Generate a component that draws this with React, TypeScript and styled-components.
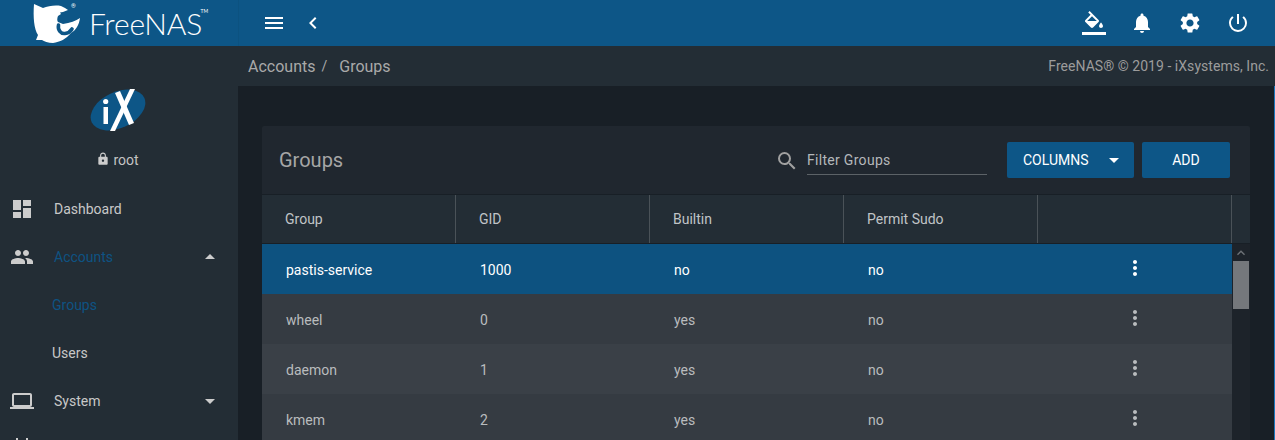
import React from 'react';
import styled, { createGlobalStyle } from 'styled-components';
import {
  MdDashboard, MdPeople, MdLaptop, MdLock, MdNotifications, MdSettings,
  MdPowerSettingsNew, MdMenu, MdChevronLeft, MdSearch, MdMoreVert, MdArrowDropDown, MdArrowDropUp,
  MdEvent, MdKeyboardArrowUp,
} from 'react-icons/md';

const Global = createGlobalStyle`
  html, body { margin: 0; padding: 0; height: 100%; overflow: hidden; background: #181f26; }
  #root { height: 440px; overflow: hidden; }
  * { box-sizing: border-box; }
  body { font-family: Roboto, "Liberation Sans", sans-serif; font-size: 14px; color: #c8c8c8; }
`;

const Page = styled.div`display: flex; flex-direction: column; width: 1275px; height: 440px; overflow: hidden;`;
const TopBar = styled.header`display: flex; height: 46px; flex: none; background: #0d5687; color: #fff;`;
const Brand = styled.div`
  width: 239px; flex: none; display: flex; align-items: center; padding-left: 33px; gap: 6px;
  border-right: 1px solid #0c5280;
`;
const BrandName = styled.span`
  font-family: Lato, sans-serif; font-weight: 300; font-size: 30px; line-height: 46px; letter-spacing: -0.2px; color: #fff;
  position: relative;
  sup { position: absolute; font-size: 5px; letter-spacing: 0; top: -12px; right: -6px; line-height: 46px; font-weight: 400; }
`;
const TopTools = styled.div`flex: 1; display: flex; align-items: center; padding: 0 25px 0 23px; font-size: 24px;`;
const TopIcon = styled.span`display: flex; align-items: center; justify-content: center; width: 24px;`;
const BackIcon = styled(TopIcon)`margin-left: 15px;`;
const Spacer = styled.div`flex: 1;`;
const TopRight = styled.div`display: flex; align-items: center; gap: 24px;`;

const Body = styled.div`flex: 1; display: flex; min-height: 0;`;
const Sidebar = styled.aside`width: 238px; flex: none; background: #232d35; overflow: hidden;`;
const Profile = styled.div`height: 139px; display: flex; flex-direction: column; align-items: center; padding-top: 42px; padding-right: 3px;`;
const ProfileName = styled.div`
  margin-top: 18px; display: flex; align-items: center; gap: 3px; font-size: 14px; line-height: 20px; color: #c4c4c4;
  svg { color: #ccc; margin-top: -2px; }
`;
const NavItem = styled.div<{ $active?: boolean; $sub?: boolean }>`
  height: 48px; flex: none; display: flex; align-items: center;
  padding-left: ${p => (p.$sub ? 52 : 10)}px;
  color: ${p => (p.$active ? '#0e5383' : '#c8c8c8')};
`;
const NavIcon = styled.span`width: 44px; flex: none; display: flex; color: #ccc; font-size: 24px;`;
const NavCaret = styled.span`margin-left: auto; margin-right: 16px; display: flex; color: #ccc; font-size: 24px;`;

const Main = styled.main`flex: 1; display: flex; flex-direction: column; min-width: 0;`;
const Crumbs = styled.div`
  height: 40px; flex: none; background: #232d35; display: flex; align-items: center; padding: 0 6px 0 10px;
  font-size: 16px; color: #a9a9a9;
`;
const CrumbSep = styled.span`margin: 0 12px 0 6px; font-size: 14px;`;
const Copy = styled.span`margin-left: auto; font-size: 14px; letter-spacing: 0.04px; color: #9c9c9c;`;

const Content = styled.div`
  flex: 1; padding: 40px 24px 0 24px; background: #181f26; min-height: 0; border-right: 1px solid #1c78bd;
`;
const Card = styled.section`background: #20272f; border-radius: 2px 2px 0 0; height: 100%; overflow: hidden; display: flex; flex-direction: column;`;
const CardHead = styled.div`
  height: 69px; flex: none; display: flex; align-items: center; padding: 0 20px 0 17px; border-bottom: 1px solid #181f26;
`;
const CardTitle = styled.h2`margin: 0; font-size: 20px; font-weight: 400; color: #a6a6a6; flex: 1; padding-bottom: 1px;`;
const SearchIcon = styled.span`display: flex; font-size: 24px; color: #a0a0a0; margin-right: 8px; margin-top: 2px;`;
const Filter = styled.div`
  width: 180px; height: 28px; margin-right: 20px; border-bottom: 1px solid #5c6267; color: #b4b8bb; line-height: 27px;
  font-size: 14px; letter-spacing: 0.3px; margin-top: 1px;
`;
const Btn = styled.button<{ $w: number }>`
  width: ${p => p.$w}px; height: 36px; border: 0; border-radius: 2px; background: #0d5687; color: #fff;
  font: 400 14px Roboto, sans-serif; display: flex; align-items: center; justify-content: center; padding: 0;
`;
const ColumnsBtn = styled(Btn)`
  justify-content: flex-start; padding-left: 16px; margin-right: 8px;
  svg { margin-left: 13px; font-size: 24px; }
`;

const Table = styled.div`flex: 1; display: flex; flex-direction: column; min-height: 0;`;
const HeadRow = styled.div`
  height: 49px; flex: none; display: grid; grid-template-columns: repeat(5, 194px) 1fr; background: #232d35;
  border-bottom: 1px solid #181f26;
`;
const HeadCell = styled.div`
  display: flex; align-items: center; padding-left: 23px; color: #c0c4c7; font-size: 14px;
  border-right: 1px solid #4a5258;
  &:nth-child(6) { border-right: 0; }
`;
const TableBody = styled.div`flex: 1; display: flex; min-height: 0;`;
const Rows = styled.div`width: 970px; flex: none;`;
const Row = styled.div<{ $sel?: boolean; $alt?: boolean }>`
  height: 50px; display: grid; grid-template-columns: repeat(5, 194px);
  background: ${p => (p.$sel ? '#0d5280' : p.$alt ? '#3a4047' : '#353b42')};
  color: ${p => (p.$sel ? '#fff' : '#b9bcbe')};
`;
const Cell = styled.div`display: flex; align-items: center; padding: 2px 0 0 24px; font-size: 14px;`;
const ActionCell = styled.div<{ $sel?: boolean }>`
  display: flex; align-items: center; padding: 0 0 2px 85px; font-size: 24px; color: ${p => (p.$sel ? '#fff' : '#b9bcbe')};
`;
const Scrollbar = styled.div`flex: 1; background: #1d232a; padding: 0 2px 0 1px; display: flex; flex-direction: column;`;
const ScrollUp = styled.div`height: 17px; display: flex; align-items: center; justify-content: center; color: #6d7176;`;
const ScrollThumb = styled.div`height: 48px; background: #75787c;`;

const rows = [
  ['pastis-service', '1000', 'no', 'no'],
  ['wheel', '0', 'yes', 'no'],
  ['daemon', '1', 'yes', 'no'],
  ['kmem', '2', 'yes', 'no'],
];

const Shark = () => (
  <svg width="50" height="44" viewBox="0 0 50 44" fill="#fff">
    <path d="M1 3 L10 7 C15 5 22 4 28 5 L32 7 L35 9 L30 11 L27 11.5 L28 13 L25 15 C24 17 24 20 25 21 L30 23 C37 22 43 20 47 17 C46 24 43 29 38 32 C33 38 27 41 20 42 C15 42 11 40 9 39 L3 39 L5 34 C1 28 0 16 1 3 Z" />
    <path d="M25.5 24 C24.5 29 28 33 32 32.5 C35 32.2 37.5 30.5 39 28" fill="none" stroke="#0d5687" strokeWidth="3.6" strokeLinecap="round" />
    <text x="38" y="7" fontSize="6" fontFamily="Roboto, sans-serif" fill="#fff">®</text>
  </svg>
);

const IxLogo = () => (
  <svg width="58" height="44" viewBox="0 0 58 44">
    <ellipse cx="29" cy="22" rx="29" ry="18" fill="#0d5687" transform="rotate(-25 29 22)" />
    <rect x="14.5" y="19" width="4.5" height="17" fill="#fff" />
    <circle cx="16.7" cy="13.5" r="2.6" fill="#fff" />
    <path d="M41 1 L46 1 L26 43 L21 43 Z" fill="#fff" />
    <path d="M26 5 L31 3 L45 35 L40 37 Z" fill="#fff" />
  </svg>
);

const PaintBucket = () => (
  <svg width="24" height="24" viewBox="0 0 24 24" fill="#fff">
    <path d="M16.56 8.94L7.62 0 6.21 1.41l2.38 2.38-5.15 5.15c-.59.59-.59 1.54 0 2.12l5.5 5.5c.29.29.68.44 1.06.44s.77-.15 1.06-.44l5.5-5.5c.59-.58.59-1.53 0-2.11zM5.21 10L10 5.21 14.79 10H5.21zM19 11.5s-2 2.17-2 3.5c0 1.1.9 2 2 2s2-.9 2-2c0-1.33-2-3.5-2-3.5z" />
    <path d="M0 21h24v3H0z" />
  </svg>
);

export default function App() {
  return (
    <Page>
      <Global />
      <TopBar>
        <Brand>
          <Shark />
          <BrandName>FreeNAS<sup>TM</sup></BrandName>
        </Brand>
        <TopTools>
          <TopIcon><MdMenu size={26} /></TopIcon>
          <BackIcon><MdChevronLeft size={28} /></BackIcon>
          <Spacer />
          <TopRight>
            <TopIcon><PaintBucket /></TopIcon>
            <TopIcon><MdNotifications size={24} /></TopIcon>
            <TopIcon><MdSettings size={24} /></TopIcon>
            <TopIcon><MdPowerSettingsNew size={24} /></TopIcon>
          </TopRight>
        </TopTools>
      </TopBar>
      <Body>
        <Sidebar>
          <Profile>
            <IxLogo />
            <ProfileName><MdLock size={14} />root</ProfileName>
          </Profile>
          <NavItem><NavIcon><MdDashboard /></NavIcon>Dashboard</NavItem>
          <NavItem $active><NavIcon><MdPeople /></NavIcon>Accounts<NavCaret><MdArrowDropUp /></NavCaret></NavItem>
          <NavItem $sub $active>Groups</NavItem>
          <NavItem $sub>Users</NavItem>
          <NavItem><NavIcon><MdLaptop /></NavIcon>System<NavCaret><MdArrowDropDown /></NavCaret></NavItem>
          <NavItem><NavIcon><MdEvent /></NavIcon></NavItem>
        </Sidebar>
        <Main>
          <Crumbs>
            Accounts<CrumbSep>/</CrumbSep>Groups
            <Copy>FreeNAS® © 2019 - iXsystems, Inc.</Copy>
          </Crumbs>
          <Content>
            <Card>
              <CardHead>
                <CardTitle>Groups</CardTitle>
                <SearchIcon><MdSearch /></SearchIcon>
                <Filter>Filter Groups</Filter>
                <ColumnsBtn $w={127}>COLUMNS<MdArrowDropDown /></ColumnsBtn>
                <Btn $w={88}>ADD</Btn>
              </CardHead>
              <Table>
                <HeadRow>
                  <HeadCell>Group</HeadCell>
                  <HeadCell>GID</HeadCell>
                  <HeadCell>Builtin</HeadCell>
                  <HeadCell>Permit Sudo</HeadCell>
                  <HeadCell />
                  <HeadCell />
                </HeadRow>
                <TableBody>
                  <Rows>
                    {rows.map((r, i) => (
                      <Row key={r[0]} $sel={i === 0} $alt={i === 2}>
                        {r.map((c, j) => <Cell key={j}>{c}</Cell>)}
                        <ActionCell $sel={i === 0}><MdMoreVert /></ActionCell>
                      </Row>
                    ))}
                  </Rows>
                  <Scrollbar>
                    <ScrollUp><MdKeyboardArrowUp size={16} /></ScrollUp>
                    <ScrollThumb />
                  </Scrollbar>
                </TableBody>
              </Table>
            </Card>
          </Content>
        </Main>
      </Body>
    </Page>
  );
}
